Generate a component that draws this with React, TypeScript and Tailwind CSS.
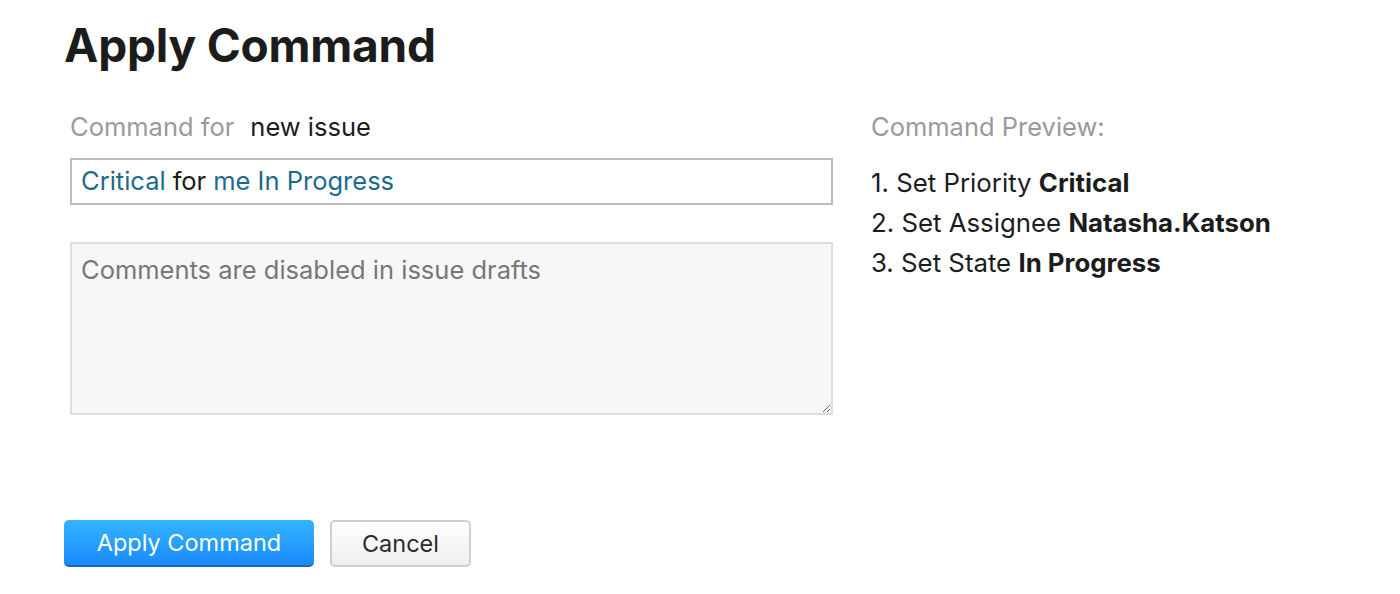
export default function App() {
    const font = { fontFamily: 'Inter, "Noto Sans", sans-serif' };

    return (
        <div className="min-h-[594px] bg-white text-[#1c1c1c] pl-16 pt-[18px]" style={font}>
            {/* Page title */}
            <h1 className="text-[46px] font-bold leading-[54px] tracking-[-0.2px]">Apply Command</h1>

            <div className="flex mt-[41px]">
                {/* Left: command input + comment */}
                <div className="w-[763px] ml-[6px]">
                    <div className="flex items-baseline text-[25.5px] leading-[28px]">
                        <span className="text-[#9a9a9a]">Command for</span>
                        <span className="ml-[16px] text-[#1c1c1c]">new issue</span>
                    </div>
                    <div className="mt-[17px] h-[47px] border-2 border-[#bdbdbd] flex items-center px-[9px] text-[25.5px]">
                        <span className="text-[#1d6b8a]">Critical</span>
                        <span className="ml-[7px] text-[#1c1c1c]">for</span>
                        <span className="ml-[7px] text-[#1d6b8a]">me In Progress</span>
                    </div>
                    <textarea
                        disabled
                        placeholder="Comments are disabled in issue drafts"
                        className="mt-[37px] block w-full h-[173px] bg-[#f7f7f7] border-2 border-[#dedede] px-[9px] py-[10px] text-[25.5px] leading-[32px] placeholder:text-[#777777] resize-y"
                    />
                </div>

                {/* Right: preview */}
                <div className="ml-[38px]">
                    <div className="text-[25.5px] leading-[28px] text-[#9a9a9a]">Command Preview:</div>
                    <ol className="mt-[22px] text-[25.8px] leading-[40px] text-[#1c1c1c]">
                        <li>1. Set Priority <b>Critical</b></li>
                        <li>2. Set Assignee <b>Natasha.Katson</b></li>
                        <li>3. Set State <b>In Progress</b></li>
                    </ol>
                </div>
            </div>

            {/* Actions */}
            <div className="flex gap-4 mt-[105px]">
                <button className="w-[250px] h-[47px] rounded-[5px] bg-gradient-to-b from-[#35b3ff] to-[#1a8bfd] border-b-2 border-[#1766b8] text-white text-[23.5px]">
                    Apply Command
                </button>
                <button className="w-[141px] h-[47px] rounded-[5px] bg-gradient-to-b from-white to-[#efefef] border-2 border-[#cfcfcf] text-[#2a2a2a] text-[23.5px]">
                    Cancel
                </button>
            </div>
        </div>
    );
}
